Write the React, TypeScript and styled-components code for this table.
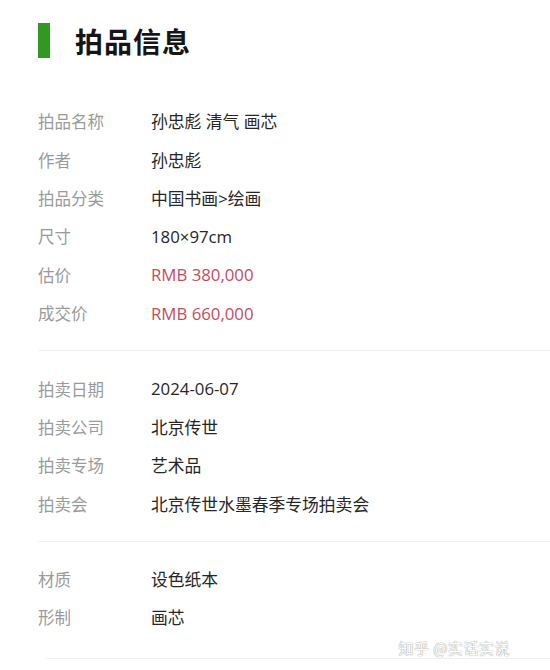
import React from "react";
import styled, { createGlobalStyle } from "styled-components";

const GlobalStyle = createGlobalStyle`
  body {
    margin: 0;
    background: #fff;
    font-family: "Noto Sans CJK SC", "Noto Sans", sans-serif;
  }
`;

const Page = styled.div`
  position: relative;
  width: 550px;
  height: 670px;
  overflow: hidden;
  padding-left: 38px;
  box-sizing: border-box;
  background: #fff;
`;

const Header = styled.div`
  display: flex;
  align-items: center;
  gap: 25px;
  padding-top: 23px;
  height: 35px;
  margin-bottom: 26px;
`;

const Bar = styled.div`
  width: 12px;
  height: 35px;
  background: #2f9a1f;
`;

const Title = styled.h1`
  margin: 0;
  font-size: 28px;
  font-weight: 700;
  color: #151515;
  letter-spacing: 1px;
`;

const Section = styled.div<{ $last?: boolean }>`
  display: flex;
  flex-direction: column;
  padding: 18px 0 ${(p) => (p.$last ? "21px" : "18px")};
  border-bottom: 1px solid #f0f0f0;
  margin-left: ${(p) => (p.$last ? "8px" : "0")};
`;

const Row = styled.div<{ $shift?: boolean }>`
  display: flex;
  align-items: center;
  height: 38.4px;
  margin-left: ${(p) => (p.$shift ? "-8px" : "0")};
`;

const Label = styled.span`
  width: 113px;
  font-size: 16.5px;
  color: #9a9a9a;
`;

const Value = styled.span<{ $price?: boolean }>`
  font-family: "Open Sans", "Noto Sans CJK SC", sans-serif;
  font-size: 16.8px;
  color: ${(p) => (p.$price ? "#c54c5e" : "#262626")};
`;

const Watermark = styled.div`
  position: absolute;
  right: 40px;
  bottom: 12px;
  font-size: 15px;
  color: #fff;
  text-shadow: 0 0 1px #9a9a9a, 0 0 1px #9a9a9a;
  letter-spacing: 0.5px;
`;

type Item = { label: string; value: string; price?: boolean };

const sections: Item[][] = [
  [
    { label: "拍品名称", value: "孙忠彪 清气 画芯" },
    { label: "作者", value: "孙忠彪" },
    { label: "拍品分类", value: "中国书画>绘画" },
    { label: "尺寸", value: "180×97cm" },
    { label: "估价", value: "RMB 380,000", price: true },
    { label: "成交价", value: "RMB 660,000", price: true },
  ],
  [
    { label: "拍卖日期", value: "2024-06-07" },
    { label: "拍卖公司", value: "北京传世" },
    { label: "拍卖专场", value: "艺术品" },
    { label: "拍卖会", value: "北京传世水墨春季专场拍卖会" },
  ],
  [
    { label: "材质", value: "设色纸本" },
    { label: "形制", value: "画芯" },
  ],
];

export default function App() {
  return (
    <>
      <GlobalStyle />
      <Page>
        <Header>
          <Bar />
          <Title>拍品信息</Title>
        </Header>
        {sections.map((items, i) => {
          const last = i === sections.length - 1;
          return (
            <Section key={i} $last={last}>
              {items.map((it) => (
                <Row key={it.label} $shift={last}>
                  <Label>{it.label}</Label>
                  <Value $price={it.price}>{it.value}</Value>
                </Row>
              ))}
            </Section>
          );
        })}
        <Watermark>知乎 @实话实说</Watermark>
      </Page>
    </>
  );
}
